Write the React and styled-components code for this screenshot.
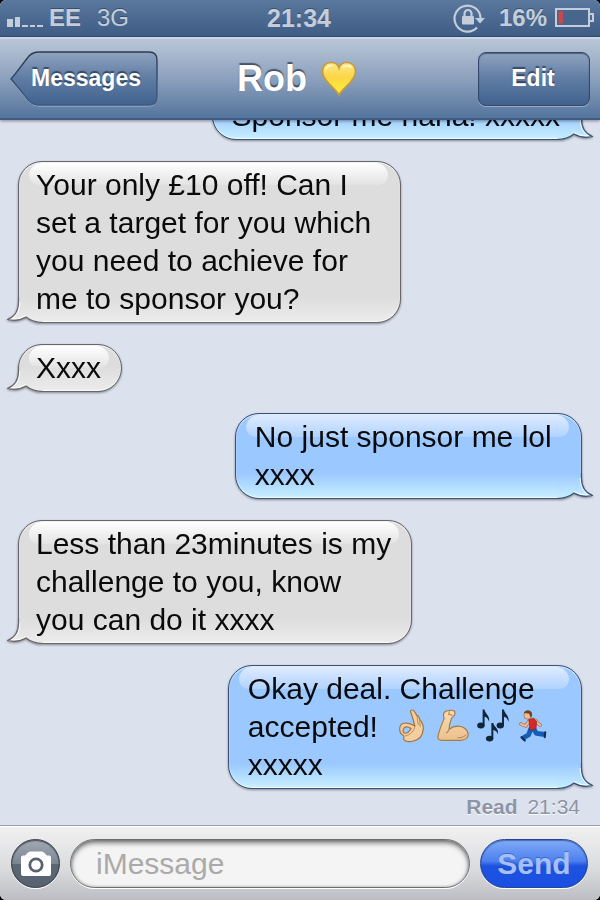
import styled, { createGlobalStyle, css } from "styled-components"

const conversa = [
  { id: 1, from: "me", lines: ["Sponsor me haha! xxxxx"] },
  {
    id: 2,
    from: "rob",
    lines: ["Your only £10 off! Can I", "set a target for you which ", "you need to achieve for", "me to sponsor you?"],
  },
  { id: 3, from: "rob", lines: ["Xxxx"] },
  { id: 4, from: "me", lines: ["No just sponsor me lol ", "xxxx"] },
  { id: 5, from: "rob", lines: ["Less than 23minutes is my", "challenge to you, know", "you can do it xxxx"] },
  {
    id: 6,
    from: "me",
    lines: [
      "Okay deal. Challenge",
      <>
        accepted!{"  "}
        <OkHand /> <Muscle /> <Notes /> <Runner />{" "}
      </>,
      "xxxxx",
    ],
  },
]

export default function App() {
  return (
    <>
      <GlobalStyle />
      <Screen>
        <StatusBar>
          <Carrier>
            <Signal />
            <b>EE</b>
            <Network>3G</Network>
          </Carrier>
          <Clock>21:34</Clock>
          <Power>
            <RotationLock />
            <b>16%</b>
            <Battery />
          </Power>
        </StatusBar>

        <NavBar>
          <BackButton type="button">
            <BackShape />
            <span>Messages</span>
          </BackButton>
          <Title>
            Rob <Heart />
          </Title>
          <EditButton type="button">Edit</EditButton>
        </NavBar>

        <Thread>
          {conversa.map((m) => (
            <Bubble key={m.id} $mine={m.from === "me"}>
              <Tail mine={m.from === "me"} />
              <BubbleText>
                {m.lines.map((line, index) => (
                  <Line key={index}>{line}</Line>
                ))}
              </BubbleText>
            </Bubble>
          ))}
          <Receipt>
            <b>Read</b> 21:34
          </Receipt>
        </Thread>

        <Composer onSubmit={(e) => e.preventDefault()}>
          <CameraButton type="button" aria-label="Camera">
            <CameraIcon />
          </CameraButton>
          <MessageInput type="text" placeholder="iMessage" aria-label="iMessage" />
          <SendButton type="submit">Send</SendButton>
        </Composer>
      </Screen>
    </>
  )
}

function Tail({ mine }) {
  const id = mine ? "tailBlue" : "tailGrey"
  return (
    <TailSvg $mine={mine} viewBox="0 0 38 26" aria-hidden="true">
      <defs>
        <linearGradient id={id} x1="0" y1="0" x2="0" y2="26" gradientUnits="userSpaceOnUse">
          <stop offset="0" stopColor={mine ? "#9ac8ff" : "#dddddd"} />
          <stop offset="1" stopColor={mine ? "#c8f0ff" : "#ececec"} />
        </linearGradient>
      </defs>
      <path
        d="M13 0V5C13 14 9 20 2.500 22.500C9 24 16 23 21 20C26 24 31 26 38 26V0Z"
        fill={`url(#${id})`}
      />
      <path d="M14.700 5C14.700 14 11 19 7 21.500C12 22 17 21 21 18.400" fill="none" stroke="#fff" strokeOpacity=".75" strokeWidth="1.200" />
      <path
        d="M13.500 0V5C13.500 14 9 20 2.500 22.500C9 24 16 23 21 20C26 24 31 25.500 38 25.500"
        fill="none"
        stroke={mine ? "#3d5276" : "#66666b"}
        strokeWidth="1.200"
        strokeLinejoin="round"
      />
    </TailSvg>
  )
}

function Signal() {
  return (
    <svg width="38" height="18" viewBox="0 0 38 18" fill="#c3cddb" role="img" aria-label="Signal">
      <rect x="0" y="10" width="6" height="8" />
      <rect x="8" y="8" width="5" height="10" />
      <rect x="15" y="16" width="6" height="2" />
      <rect x="23" y="16" width="5" height="2" />
      <rect x="30" y="16" width="6" height="2" />
    </svg>
  )
}

function RotationLock() {
  return (
    <svg width="32" height="30" viewBox="0 0 32 30" role="img" aria-label="Rotation lock">
      <path d="M24 24.500A13 13 0 1 1 27.500 15" fill="none" stroke="#c3cddb" strokeWidth="2.200" />
      <path d="M22 15H32L27 20.500Z" fill="#c3cddb" />
      <rect x="9" y="13" width="12" height="8.500" rx="1" fill="#c3cddb" />
      <path d="M11.500 13.500V10.500A3.500 3.500 0 0 1 18.500 10.500V13.500" fill="none" stroke="#c3cddb" strokeWidth="2.200" />
    </svg>
  )
}

function Battery() {
  return (
    <svg width="40" height="20" viewBox="0 0 40 20" role="img" aria-label="Battery">
      <rect x="1" y="1" width="33" height="17" fill="#48658c" stroke="#c3cddb" strokeWidth="2" />
      <path d="M35 6H38V13H35" fill="none" stroke="#c3cddb" strokeWidth="2" />
      <rect x="3.500" y="3.500" width="4.500" height="12" fill="#c9484c" />
    </svg>
  )
}

function BackShape() {
  return (
    <svg width="148" height="56" viewBox="0 0 148 56" aria-hidden="true">
      <defs>
        <linearGradient id="backFill" x1="0" y1="0" x2="0" y2="1">
          <stop offset="0" stopColor="#8fa3bf" />
          <stop offset=".5" stopColor="#5f7ca3" />
          <stop offset="1" stopColor="#41628f" />
        </linearGradient>
        <linearGradient id="backLine" x1="0" y1="0" x2="0" y2="1">
          <stop offset="0" stopColor="#2a3950" />
          <stop offset="1" stopColor="#3c5a83" />
        </linearGradient>
      </defs>
      <path
        d="M1 29C8 21 14 12 19 6Q23 2 29 2H139Q147 2 147 10V47Q147 55 139 55H29Q23 55 19 51C14 45 8 37 1 29Z"
        fill="none"
        stroke="#b9c8dc"
        strokeOpacity=".8"
      />
      <path
        d="M1 28C8 20 14 11 19 5Q23 1 29 1H139Q147 1 147 9V46Q147 54 139 54H29Q23 54 19 50C14 44 8 36 1 28Z"
        fill="url(#backFill)"
        stroke="url(#backLine)"
        strokeWidth="1.400"
      />
    </svg>
  )
}

function Heart() {
  return (
    <svg width="36" height="36" viewBox="0 0 36 36" role="img" aria-label="yellow heart">
      <defs>
        <linearGradient id="heartFill" x1="0" y1="0" x2="0" y2="1">
          <stop offset="0" stopColor="#ffe98a" />
          <stop offset=".45" stopColor="#fbd548" />
          <stop offset="1" stopColor="#fff236" />
        </linearGradient>
      </defs>
      <path
        d="M18 34C15 27 2 21 1.500 11C1.300 5 5 1.500 10 1.500C14 1.500 17 3.500 18 7C19 3.500 22 1.500 26 1.500C31 1.500 34.700 5 34.500 11C34 21 21 27 18 34Z"
        fill="url(#heartFill)"
        stroke="#c9983a"
        strokeWidth="1.600"
      />
      <path d="M5 8C6 5.500 8 4.500 11 4.500M22 6C24 4.500 28 4.500 30 6" fill="none" stroke="#fff8cc" strokeWidth="1.600" strokeLinecap="round" />
    </svg>
  )
}

function OkHand() {
  return (
    <Emoji viewBox="0 0 34 34" role="img" aria-label="ok hand">
      <path
        d="M16 2C16 0 19 0 20 2L22.500 6C24.500 6 25 8 25.500 10.500C28 13 29.500 17 29 21C28.500 27 25 31 19 32.500C15 33.500 11 33 9 31L9 27C6 25.500 4.500 22 5 18.500C5.500 15 9 13.500 12 14C15 14 18 15.500 20.500 17L18 8Z"
        fill="#f3cfa0"
        stroke="#a3723f"
        strokeWidth="1.200"
        strokeLinejoin="round"
      />
      <path d="M8.500 20.500C9 17.500 13 17 16.500 19.500C15 22.500 12.500 24.500 10 24.500C8.500 24 8 22.500 8.500 20.500Z" fill="#9ac8ff" stroke="#a3723f" strokeWidth="1.200" />
      <path d="M20.500 17C20 22 16 26 10 27.500M22.500 6L24 16M25.500 10.500L26 18" fill="none" stroke="#bd8850" strokeWidth="1" />
    </Emoji>
  )
}

function Muscle() {
  return (
    <Emoji viewBox="0 0 34 34" role="img" aria-label="flexed biceps">
      <defs>
        <linearGradient id="armFill" x1="0" y1="0" x2="0" y2="1">
          <stop offset="0" stopColor="#f8dcb2" />
          <stop offset="1" stopColor="#ecc08c" />
        </linearGradient>
      </defs>
      <path
        d="M8 4C9 1 13 1 15 .8C18 .5 20 2 19.500 4.500C19 7 17 7.500 16 9C15 12 13.500 16 13.500 20.500C17 17.500 21 16.500 26 17.500C31 19.500 33.500 23 33 27C32.500 30.500 29 31.500 24 31.800H6C3 31.800 1.500 30.500 2 28C3 22 6 15 8.500 9C7.500 8 7.500 6 8 4Z"
        fill="url(#armFill)"
        stroke="#a97a47"
        strokeWidth="1.200"
      />
      <path d="M14 2L13 5L17 6M13.500 20.500C13 22 12 23.500 10.500 24.500M22 29Q28 29.500 31 26" fill="none" stroke="#b9864f" strokeWidth="1.100" />
    </Emoji>
  )
}

function Notes() {
  return (
    <Emoji viewBox="0 0 34 34" role="img" aria-label="musical notes">
      <g fill="#10263b">
        <ellipse cx="4" cy="16.500" rx="3.800" ry="3" />
        <path d="M5.800 17V0H7.800C8.500 5 13.500 6 12.500 12.500C11.500 9.500 10 8 7.800 7.500V17Z" />
        <ellipse cx="24" cy="16.500" rx="3.800" ry="3" />
        <path d="M25.800 17V0H27.800C28.500 5 33.500 6 32.500 12.500C31.500 9.500 30 8 27.800 7.500V17Z" />
        <ellipse cx="13" cy="30" rx="3.800" ry="3" />
        <path d="M14.800 30V14H16.800C17.500 18.500 22.500 19 21.500 25.500C20.500 22.500 19 21.500 16.800 21V30Z" />
      </g>
    </Emoji>
  )
}

function Runner() {
  return (
    <Emoji viewBox="0 0 34 34" role="img" aria-label="runner">
      <path d="M11 11L7 17L2 15" fill="none" stroke="#a9643f" strokeWidth="3.400" strokeLinecap="round" strokeLinejoin="round" />
      <path d="M11 11L7 17L2 15" fill="none" stroke="#eebc8c" strokeWidth="2.200" strokeLinecap="round" strokeLinejoin="round" />
      <path d="M17 11L19 14L22 16" fill="none" stroke="#a9643f" strokeWidth="3.400" strokeLinecap="round" />
      <path d="M17 11L19 14L22 16" fill="none" stroke="#eebc8c" strokeWidth="2.200" strokeLinecap="round" />
      <path d="M12 20L10 26L5 29M15 20L18 24.500L25 25.500" fill="none" stroke="#145cb4" strokeWidth="5" strokeLinejoin="round" strokeLinecap="round" />
      <path d="M2.500 28.500L6 32M27 23.500L26.500 28.500" stroke="#172c51" strokeWidth="2.200" strokeLinecap="round" />
      <path d="M10 10.500L15 9L18 12L17.500 20L11 21L11 15Z" fill="#d9282b" stroke="#8e2224" strokeWidth=".8" />
      <circle cx="9" cy="6" r="4" fill="#efbd90" stroke="#9b623d" strokeWidth=".7" />
      <path d="M5 3.500C6.500 -.5 13 0 13.500 4.500C13.500 6.500 13 8 12 8.500L10.500 4.500Z" fill="#71422a" />
    </Emoji>
  )
}

function CameraIcon() {
  return (
    <svg width="32" height="26" viewBox="0 0 32 26" aria-hidden="true">
      <path
        d="M3 4.500H5L8 1.500Q9 .5 11 .5H21Q23 .5 24 1.500L27 4.500H29Q31 4.500 31 6.500V23Q31 25 29 25H3Q1 25 1 23V6.500Q1 4.500 3 4.500Z"
        fill="#fff"
      />
      <circle cx="16" cy="14" r="6.200" fill="#fff" stroke="#59636f" strokeWidth="2.800" />
    </svg>
  )
}

const GlobalStyle = createGlobalStyle`
  * {
    box-sizing: border-box;
  }
  body {
    margin: 0;
    background: #000;
    font-family: "Liberation Sans", Arial, sans-serif;
  }
  button, input {
    font-family: inherit;
    margin: 0;
  }
`

const Screen = styled.div`
  height: 100vh;
  display: flex;
  flex-direction: column;
  overflow: hidden;
  border-radius: 6px;
  background: #dbe1ed;
`

const StatusBar = styled.header`
  flex: none;
  height: 37px;
  padding: 0 5px 0 7px;
  display: grid;
  grid-template-columns: 1fr auto 1fr;
  align-items: center;
  font-size: 24px;
  color: #c3cddb;
  text-shadow: 0 -1px 0 #38506f;
  background: linear-gradient(#5a779c, #3f5d85);
  border-bottom: 1px solid #35507a;
`

const Carrier = styled.div`
  display: flex;
  align-items: center;
  gap: 4px;
`

const Network = styled.span`
  margin-left: 12px;
`

const Clock = styled.time`
  padding-right: 4px;
  font-size: 25px;
  font-weight: bold;
`

const Power = styled.div`
  display: flex;
  align-items: center;
  justify-content: flex-end;
  gap: 8px;

  b {
    margin-left: 6px;
  }
`

const NavBar = styled.nav`
  flex: none;
  height: 83px;
  padding: 0 10px;
  display: grid;
  grid-template-columns: 1fr auto 1fr;
  align-items: center;
  position: relative;
  z-index: 2;
  background: linear-gradient(#b9c6d8, #8ca1bd 50%, #54749d);
  border-top: 2px solid #ccd7e5;
  border-bottom: 2px solid #405c82;
  box-shadow: 0 1px 3px rgba(0, 0, 0, 0.4);
`

const navText = css`
  font-size: 23px;
  font-weight: bold;
  color: #fff;
  text-shadow: 0 -2px 1px rgba(30, 45, 70, 0.7);
`

const BackButton = styled.button`
  ${navText}
  width: 148px;
  height: 56px;
  padding: 0;
  display: grid;
  border: 0;
  background: none;

  svg, span {
    grid-area: 1 / 1;
    place-self: center;
  }
  span {
    padding-left: 4px;
  }
`

const Title = styled.h1`
  margin: 0;
  padding-right: 6px;
  display: flex;
  align-items: center;
  gap: 14px;
  font-size: 36px;
  color: #fff;
  text-shadow: 0 -2px 1px rgba(30, 45, 70, 0.7);
`

const EditButton = styled.button`
  ${navText}
  justify-self: end;
  width: 112px;
  height: 54px;
  padding: 0 2px 0 0;
  border: 1px solid #33486a;
  border-radius: 8px;
  background: linear-gradient(#8fa3bf, #5f7ca3 50%, #41628f);
  box-shadow: 0 1px 0 rgba(190, 205, 225, 0.6), inset 0 1px 1px rgba(20, 30, 50, 0.5);
`

const Thread = styled.main`
  flex: 1;
  min-height: 0;
  overflow: hidden;
  padding: 0 18px;
  display: flex;
  flex-direction: column;
  justify-content: flex-end;
`

const Bubble = styled.article`
  flex: none;
  position: relative;
  align-self: ${(p) => (p.$mine ? "flex-end" : "flex-start")};
  padding: ${(p) => (p.$mine ? "4px 21px 4px 19px" : "4px 20px 4px 17px")};
  margin-bottom: 21px;
  border: 1px solid ${(p) => (p.$mine ? "#3d5276" : "#66666b")};
  border-radius: 24px;
  background: ${(p) =>
    p.$mine
      ? "linear-gradient(#9ac8ff calc(100% - 25px), #c8f0ff)"
      : "linear-gradient(#dddddd calc(100% - 25px), #ececec)"};
  box-shadow: inset 0 1px 1px rgba(255, 255, 255, 0.7), inset 0 -1px 1px rgba(255, 255, 255, 0.8);
  filter: drop-shadow(0 1px 1px rgba(0, 0, 0, 0.4));

  &:nth-last-child(2) {
    margin-bottom: 0;
  }

  &::before {
    content: "";
    position: absolute;
    top: 1px;
    left: 10px;
    right: 12px;
    height: 22px;
    border-radius: 16px 16px 12px 12px;
    background: ${(p) =>
      p.$mine ? "linear-gradient(#deebff, #b0d3ff)" : "linear-gradient(#ffffff, #e3e3e3)"};
  }
`

const TailSvg = styled.svg`
  position: absolute;
  bottom: -1px;
  width: 38px;
  height: 26px;
  ${(p) => (p.$mine ? "right: -14px; transform: scaleX(-1);" : "left: -14px;")}
`

const BubbleText = styled.div`
  position: relative;
  font-size: 30px;
  line-height: 38px;
  color: #0a0a0c;
  white-space: pre;
`

const Line = styled.div`
  height: 38px;
`

const Emoji = styled.svg`
  width: 33px;
  height: 34px;
  vertical-align: -6px;
`

const Receipt = styled.p`
  flex: none;
  margin: 0;
  padding-right: 2px;
  text-align: right;
  font-size: 21px;
  line-height: 36px;
  color: #8d94a6;
  text-shadow: 0 1px 0 #fff;

  b {
    margin-right: 4px;
  }
`

const Composer = styled.form`
  flex: none;
  display: flex;
  align-items: center;
  gap: 10px;
  padding: 13px 12px 12px 11px;
  border-top: 1px solid #9a9ea8;
  background: linear-gradient(#f1f1f2, #d9dadc 60%, #bdbec4);
  box-shadow: inset 0 1px 0 #fff;
`

const CameraButton = styled.button`
  flex: none;
  width: 49px;
  height: 49px;
  padding: 0;
  display: grid;
  place-items: center;
  border: 1px solid #343b47;
  border-radius: 50%;
  background: linear-gradient(#a2a9b4, #7b8592 50%, #5c6774 51%, #59636f);
  box-shadow: 0 1px 0 #fff, inset 0 1px 1px rgba(20, 25, 35, 0.6);
`

const MessageInput = styled.input`
  flex: 1;
  min-width: 0;
  height: 49px;
  padding: 0 25px;
  font-size: 30px;
  color: #111;
  border: 1px solid #6c6c70;
  border-radius: 25px;
  background: #f4f4f4;
  box-shadow: inset 0 3px 5px rgba(0, 0, 0, 0.5), inset 0 0 3px rgba(0, 0, 0, 0.3), 0 1px 0 #fff;
  outline: none;

  &::placeholder {
    color: #aaaaaa;
    opacity: 1;
  }
`

const SendButton = styled.button`
  flex: none;
  width: 108px;
  height: 49px;
  padding: 0;
  font-size: 30px;
  font-weight: bold;
  color: #a5c0f8;
  text-shadow: 0 -1px 0 rgba(20, 50, 140, 0.4);
  border: 1px solid #24459a;
  border-radius: 25px;
  background: linear-gradient(#80aaf6, #4c80ee 45%, #1e52dd 55%, #1a4fe4);
  box-shadow: 0 1px 0 #fff, inset 0 1px 1px rgba(20, 40, 110, 0.5);
`
